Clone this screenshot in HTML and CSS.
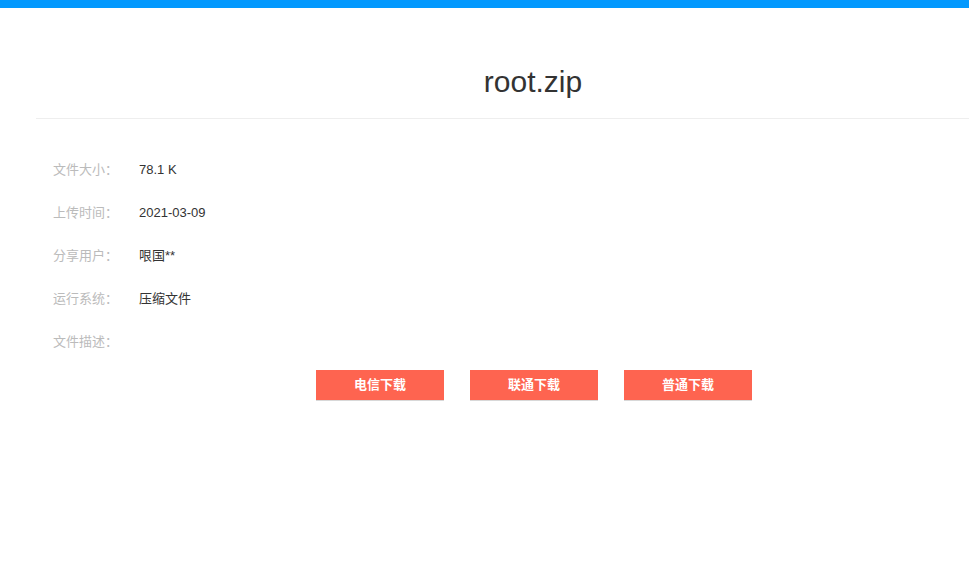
FILE: index.html
```html
<html>
<head>
    <meta charset="utf-8">
    <link rel="stylesheet" href="styles.css">
</head>
<body>
    <div class="topBar"></div>
    <div class="page">
        <h1 class="fileName">root.zip</h1>
        <ul class="fileInfo">
            <li><span class="label">文件大小：</span><span class="value">78.1 K</span></li>
            <li><span class="label">上传时间：</span><span class="value">2021-03-09</span></li>
            <li><span class="label">分享用户：</span><span class="value">哏国**</span></li>
            <li><span class="label">运行系统：</span><span class="value">压缩文件</span></li>
            <li><span class="label">文件描述：</span><span class="value"></span></li>
        </ul>
        <div class="downloads">
            <a class="downloadBtn" href="#">电信下载</a>
            <a class="downloadBtn" href="#">联通下载</a>
            <a class="downloadBtn" href="#">普通下载</a>
        </div>
    </div>
</body>
</html>
```

FILE: styles.css
```css
body {
    margin: 0px;
    background-color: #ffffff;
    font-family: "Liberation Sans", "Noto Sans CJK SC", sans-serif;
}
.topBar {
    height: 8px;
    background-color: #0399fe;
}
.page {
    margin-left: 36px;
}
.fileName {
    margin: 0px;
    padding: 54px 0px 16px 61px;
    font-size: 30px;
    line-height: 40px;
    font-weight: normal;
    color: #333333;
    text-align: center;
    border-bottom: 1px solid #eeeeee;
}
.fileInfo {
    list-style: none;
    margin: 29px 0px 0px 0px;
    padding: 0px 17px;
}
.fileInfo li {
    display: flex;
    height: 43px;
    line-height: 43px;
    font-size: 13px;
}
.label {
    width: 86px;
    color: #bbbbbb;
}
.value {
    color: #333333;
}
.downloads {
    display: flex;
    justify-content: center;
    gap: 26px;
    margin-top: 7px;
    padding-left: 63px;
}
.downloadBtn {
    display: block;
    width: 128px;
    height: 30px;
    line-height: 30px;
    text-align: center;
    background-color: #fe6450;
    box-shadow: 0px 1px 0px #d8d8d8;
    color: #ffffff;
    font-size: 13px;
    font-weight: bold;
    text-decoration: none;
}
```
